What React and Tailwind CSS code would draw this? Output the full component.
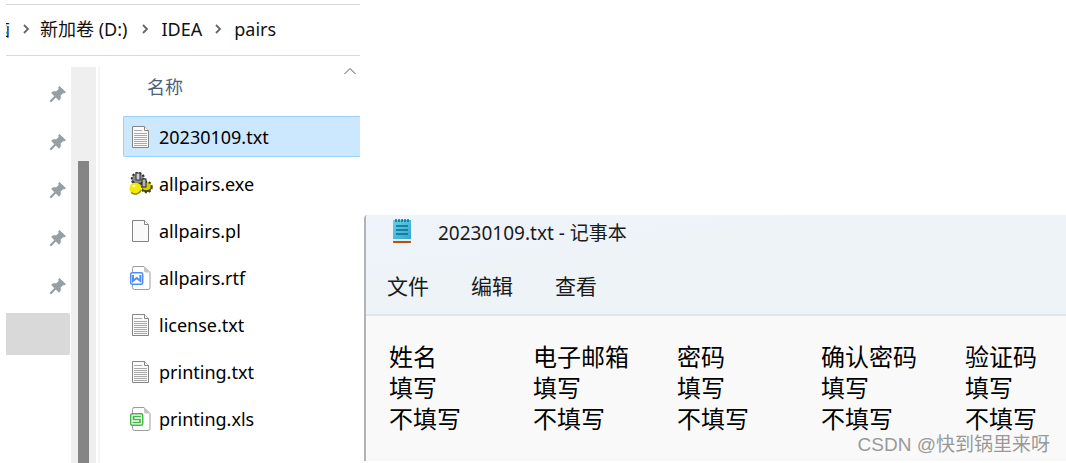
import { useState } from 'react';

const files = [
  { name: '20230109.txt', type: 'txt' },
  { name: 'allpairs.exe', type: 'exe' },
  { name: 'allpairs.pl', type: 'file' },
  { name: 'allpairs.rtf', type: 'rtf' },
  { name: 'license.txt', type: 'txt' },
  { name: 'printing.txt', type: 'txt' },
  { name: 'printing.xls', type: 'xls' },
];

const menus = ['文件', '编辑', '查看'];

const pins = [1, 2, 3, 4, 5];

const content = [
  ['姓名', '电子邮箱', '密码', '确认密码', '验证码'],
  ['填写', '填写', '填写', '填写', '填写'],
  ['不填写', '不填写', '不填写', '不填写', '不填写'],
]
  .map((row) => row.join('\t'))
  .join('\n');

const Chevron = () => (
  <svg className="w-2 h-3 shrink-0" viewBox="0 0 8 12" fill="none" stroke="#666" strokeWidth="1.8">
    <path d="M2 2l4 4-4 4" />
  </svg>
);

const PinIcon = () => (
  <svg className="w-4 h-4" viewBox="0 0 16 16" fill="#959fa5">
    <path d="M9.6 0L16 6.2 14.6 7.3 13 7.2 10.7 9.6 10.8 12.6 9 14.8 5.9 11.6 1.6 16H0v-1.500L4.300 10.100 1.100 7 3.200 5.300H6.300L8.700 2.900 8.300 1.200z" />
  </svg>
);

const FileIcon = ({ type }) => {
  if (type === 'exe') {
    return (
      <svg className="w-6 h-6" viewBox="0 0 24 24">
        <circle cx="9" cy="7" r="6" fill="#9a9a9a" stroke="#3a3a3a" strokeWidth="2.500" strokeDasharray="2.200 1.400" />
        <circle cx="9" cy="7" r="5" fill="#8f8f8f" />
        <path d="M3.500 8c2 3 8 4 11 1v3c-3 3-9 2-11-1z" fill="#3f3f3f" />
        <rect x="7" y="1" width="4" height="7" fill="#cfcfcf" stroke="#333" />
        <circle cx="17.500" cy="15" r="5" fill="#d9d200" stroke="#4a4700" strokeWidth="2.500" strokeDasharray="2 1.600" />
        <circle cx="17.500" cy="15" r="4" fill="#d6cf00" />
        <path d="M13 16c2 3 6 3 9 0v2c-3 3-7 3-9 0z" fill="#4a4700" />
        <rect x="13" y="7" width="4" height="8" fill="#b5b5b5" stroke="#222" />
        <circle cx="6.500" cy="16.500" r="6" fill="#f0ea00" />
        <path d="M2 20.500c3 2.500 8 2 10-2" stroke="#8a8500" strokeWidth="1.500" fill="none" />
        <circle cx="5" cy="14" r="1.500" fill="#fffde0" />
      </svg>
    );
  }

  if (type === 'rtf' || type === 'xls') {
    const color = type === 'rtf' ? '#4f8df5' : '#45b649';
    return (
      <svg className="w-6 h-6" viewBox="0 0 24 24" fill="none">
        <path d="M4.500.5H15l6 6v15a2 2 0 0 1-2 2H5.500a2 2 0 0 1-2-2v-19a2 2 0 0 1 2-2z" fill="#fff" stroke="#9b9b9b" />
        <path d="M15 .5v4a2 2 0 0 0 2 2h4z" fill="#c4c4c4" />
        <rect x="1.700" y="6.700" width="12" height="11.600" rx="1.500" fill="#fff" stroke={color} strokeWidth="1.500" />
        {type === 'rtf' ? (
          <path d="M4 9v6l3.700-3 3.700 3V9" stroke={color} strokeWidth="2" />
        ) : (
          <path d="M12 9.500H4.500v3H11v3H3.500" stroke={color} strokeWidth="1.700" />
        )}
      </svg>
    );
  }

  return (
    <svg className="w-6 h-6" viewBox="0 0 24 24" fill="none">
      <path d="M3.500 1.500h12l4 4v17h-16z" fill="#fafafa" stroke="#858585" />
      <path d="M15.500 1.500v4h4" fill="#fff" stroke="#858585" />
      {type === 'txt' && (
        <path
          d="M5 5.500h8M5 8.500h13M5 10.500h13M5 12.500h13M5 14.500h13M5 16.500h13M5 18.500h13M5 20.500h13"
          stroke="#a8a8a8"
        />
      )}
    </svg>
  );
};

const NotepadIcon = () => (
  <svg className="w-[18px] h-6" viewBox="0 0 18 24">
    <defs>
      <linearGradient id="cover" x1="0" y1="0" x2="1" y2="1">
        <stop offset="0" stopColor="#62d3ea" />
        <stop offset="1" stopColor="#35a5c9" />
      </linearGradient>
    </defs>
    <rect y="21" width="18" height="3" rx="1" fill="#b5500f" />
    <rect y="19" width="18" height="3" fill="#e8e8e8" />
    <rect y="1" width="18" height="19" fill="url(#cover)" />
    <path d="M3 0v3M6 0v3M9 0v3M12 0v3M15 0v3" stroke="#0c6a94" strokeWidth="1.500" />
    <path d="M3 7h12M3 11h12M3 15h12" stroke="#0c6a94" strokeWidth="1.500" />
  </svg>
);

const Explorer = () => {
  const [selected, setSelected] = useState('20230109.txt');

  return (
    <section className="w-[354px] shrink-0 flex flex-col">
      <nav className="flex items-center h-[52px] pb-0.5 border-y border-[#d9d9d9] text-lg text-[#111]">
        <span className="w-1 flex justify-end overflow-hidden">
          <span>脑</span>
        </span>
        <span className="ml-3 flex"><Chevron /></span>
        <a href="#d" className="ml-2.5">新加卷 (D:)</a>
        <span className="ml-3.5 flex"><Chevron /></span>
        <a href="#idea" className="ml-3">IDEA</a>
        <span className="ml-3 flex"><Chevron /></span>
        <a href="#pairs" className="ml-3">pairs</a>
      </nav>

      <div className="flex grow">
        <aside className="w-16 pt-[14px]">
          {pins.map((pin) => (
            <div key={pin} className="h-12 flex items-center justify-end pr-1">
              <PinIcon />
            </div>
          ))}
          <div className="h-[42px] mt-[3px] bg-[#d9d9d9] rounded-r-xs" />
        </aside>
        <div className="w-[25px] ml-px mt-[11px] bg-[#efefef] flex flex-col items-center pt-[94px]">
          <div className="w-[11px] grow bg-[#858585]" />
        </div>
        <div className="w-0.5 ml-0.5 mt-[11px] bg-[#f5f5f5]" />

        <div className="grow ml-[23px] pt-[11px]">
          <div className="flex items-start justify-between h-[49px] pl-6 pr-1 text-lg text-[#4c607a]">
            <span className="pt-2 leading-6">名称</span>
            <svg className="w-3 h-2" viewBox="0 0 12 8" fill="none" stroke="#555">
              <path d="M.5 7L6 1.500 11.500 7" />
            </svg>
          </div>
          <ul className="flex flex-col gap-1.5">
            {files.map((file) => (
              <li key={file.name}>
                <button
                  onClick={() => setSelected(file.name)}
                  className={`w-full h-[41px] flex items-center gap-1.5 pl-[5px] border border-r-0 rounded-l-xs text-lg text-black ${
                    selected === file.name ? 'bg-[#cce8ff] border-[#99d1ff]' : 'border-transparent'
                  }`}
                >
                  <FileIcon type={file.type} />
                  <span>{file.name}</span>
                </button>
              </li>
            ))}
          </ul>
        </div>
      </div>
    </section>
  );
};

const Notepad = () => {
  const [text, setText] = useState(content);

  return (
    <section className="relative grow min-w-0 ml-1 mt-[211px] mb-0.5 flex flex-col border-l-2 border-[#b3b3b3] rounded-tl-sm overflow-hidden">
      <header className="bg-linear-to-br from-[#eff4fc] to-[#edf3f7] to-40% border-b-2 border-[#e1e6ea]">
        <div className="flex items-start h-9 pt-1 pl-[27px] gap-[27px] text-[19px] leading-7 text-[#1a1a1a]">
          <NotepadIcon />
          <h1>20230109.txt - 记事本</h1>
        </div>
        <div className="flex items-center h-[63px] pl-[21px] pt-1.5 gap-[42px] text-[21px] leading-8 text-[#1a1a1a]">
          {menus.map((menu) => (
            <button key={menu}>{menu}</button>
          ))}
        </div>
      </header>
      <textarea
        aria-label="记事本"
        value={text}
        onChange={(e) => setText(e.target.value)}
        spellCheck={false}
        className="grow w-full pl-[23px] pt-[25px] bg-[#f9f9f9] text-2xl leading-[31px] text-black whitespace-pre [tab-size:144px] resize-none outline-none overflow-hidden"
      />
      <span className="absolute right-4 bottom-1 text-[19px] leading-6 text-[#999] font-['Liberation_Sans','Noto_Sans_CJK_SC',sans-serif]">
        CSDN @快到锅里来呀
      </span>
    </section>
  );
};

const App = () => {
  return (
    <div className="min-h-screen bg-white flex pl-1.5 pt-1 overflow-hidden font-['Noto_Sans','Noto_Sans_CJK_SC',sans-serif]">
      <Explorer />
      <Notepad />
    </div>
  );
};

export default App;
